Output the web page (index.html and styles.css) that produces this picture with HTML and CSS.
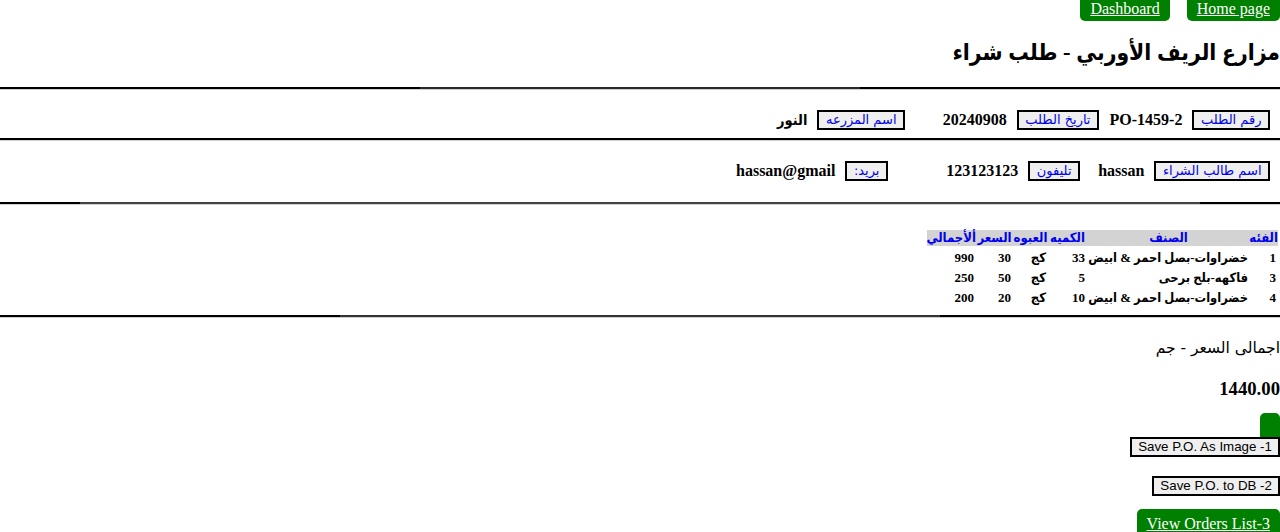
FILE: index.html
```html
<!DOCTYPE html>
<html lang="ar" dir="rtl">
<head>
<meta charset="utf-8">
<title>طلب شراء</title>
<link rel="stylesheet" href="styles.css">
</head>
<body>
<nav class="top-links">
  <a class="green-btn" href="#">Home page</a>
  <a class="green-btn" href="#">Dashboard</a>
</nav>
<h2 class="title">مزارع الريف الأوربي - طلب شراء</h2>
<hr class="rule rule-a">
<div class="info-row row-one">
  <div class="field fw-1"><span class="tag">رقم الطلب</span><b class="val">PO-1459-2</b></div>
  <div class="field fw-2"><span class="tag">تاريخ الطلب</span><b class="val">20240908</b></div>
  <div class="field"><span class="tag">اسم المزرعه</span><b class="val ar-val">النور</b></div>
</div>
<hr class="rule rule-b">
<div class="info-row row-two">
  <div class="field fw-3"><span class="tag">اسم طالب الشراء</span><b class="val">hassan</b></div>
  <div class="field fw-4"><span class="tag">تليفون</span><b class="val">123123123</b></div>
  <div class="field"><span class="tag">بريد:</span><b class="val">hassan@gmail</b></div>
</div>
<hr class="rule rule-c">
<table class="items">
  <colgroup>
    <col class="c1"><col class="c2"><col class="c3"><col class="c4"><col class="c5"><col class="c6">
  </colgroup>
  <thead>
    <tr><th>الفئه</th><th>الصنف</th><th>الكميه</th><th>العبوه</th><th>السعر</th><th>ألأجمالي</th></tr>
  </thead>
  <tbody>
    <tr><td>1</td><td class="item">خضراوات-بصل احمر &amp; ابيض</td><td>33</td><td>كج</td><td>30</td><td>990</td></tr>
    <tr><td>3</td><td class="item">فاكهه-بلح برحى</td><td>5</td><td>كج</td><td>50</td><td>250</td></tr>
    <tr><td>4</td><td class="item">خضراوات-بصل احمر &amp; ابيض</td><td>10</td><td>كج</td><td>20</td><td>200</td></tr>
  </tbody>
</table>
<hr class="rule rule-d">
<p class="total-label">اجمالى السعر - جم</p>
<h3 class="total">1440.00</h3>
<div class="actions">
  <a class="green-stub" href="#"></a>
  <button class="act-btn" type="button">1- Save P.O. As Image</button>
  <button class="act-btn second" type="button">2- Save P.O. to DB</button>
  <a class="green-btn orders" href="#">3-View Orders List</a>
</div>
</body>
</html>
```
FILE: styles.css
```css
html, body {
  margin: 0;
  padding: 0;
  background: #ffffff;
}
body {
  font-family: "Liberation Serif", "DejaVu Sans Condensed", "DejaVu Sans", serif;
  font-size: 16px;
  color: #000;
  overflow: hidden;
}
.top-links {
  display: flex;
  gap: 17px;
  height: 21px;
}
.green-btn {
  display: block;
  background: #008000;
  color: #fff;
  text-decoration: underline;
  padding: 0 10px;
  height: 21px;
  line-height: 18px;
  border-radius: 0 0 5px 5px;
  font-family: "Liberation Serif", serif;
  font-size: 16px;
}
.title {
  margin: 18px 0 0 0;
  font-size: 22.7px;
  line-height: 28px;
  font-weight: bold;
  font-family: "Liberation Serif", "DejaVu Sans Condensed", "DejaVu Sans", serif;
}
.rule {
  border: 0;
  height: 2px;
  margin: 0;
  box-shadow: 0 1px 0 #cfcfcf;
}
.rule-a {
  margin-top: 20px;
  background: linear-gradient(to right, #000 0 420px, #2a2a2a 420px 860px, #000 860px);
}
.rule-b {
  margin-top: 8px;
  background: #000;
}
.rule-c {
  margin-top: 21px;
  background: linear-gradient(to right, #000 0 80px, #444 80px 1200px, #000 1200px);
}
.rule-d {
  margin-top: 7px;
  background: linear-gradient(to right, #000 0 340px, #333 340px 940px, #000 940px);
}
.info-row {
  display: flex;
  align-items: center;
  height: 20px;
  padding-right: 10px;
}
.row-one {
  margin-top: 21px;
}
.row-two {
  margin-top: 21px;
}
.field {
  display: flex;
  align-items: center;
  gap: 10px;
  flex: none;
}
.fw-1 { width: 171px; }
.fw-2 { width: 194px; }
.fw-3 { width: 190px; }
.fw-4 { width: 192px; }
.tag {
  display: inline-block;
  box-sizing: border-box;
  height: 20px;
  line-height: 16px;
  padding: 0 6.5px;
  border: 2px solid #000;
  background: #efefef;
  color: #0000ee;
  font-family: "DejaVu Sans", sans-serif;
  font-size: 13px;
}
.val {
  font-weight: bold;
  font-size: 16px;
  font-family: "Liberation Serif", "DejaVu Sans Condensed", "DejaVu Sans", serif;
  white-space: nowrap;
}
.ar-val {
  font-size: 14.5px;
}
.items {
  margin: 26px 2px 0 0;
  border-collapse: collapse;
  table-layout: fixed;
  width: 351px;
  font-size: 13px;
}
.c1 { width: 28px; }
.c2 { width: 163px; }
.c3 { width: 39px; }
.c4 { width: 35px; }
.c5 { width: 37px; }
.c6 { width: 49px; }
.items th {
  background: #d3d3d3;
  color: #0000ee;
  font-family: "DejaVu Sans Condensed", "DejaVu Sans", sans-serif;
  font-weight: bold;
  height: 16px;
  line-height: 16px;
  padding: 0;
  text-align: center;
  white-space: nowrap;
  border-bottom: 2px solid #fff;
}
.items td {
  font-family: "Liberation Serif", "DejaVu Sans Condensed", "DejaVu Sans", serif;
  font-weight: bold;
  height: 20px;
  line-height: 20px;
  padding: 0 2px 0 1px;
  text-align: right;
  white-space: nowrap;
}
.items td.item {
  font-size: 12.8px;
}
.total-label {
  margin: 22px 0 0 0;
  font-family: "DejaVu Sans", sans-serif;
  font-size: 15.5px;
  line-height: 19px;
}
.total {
  margin: 20px 0 0 0;
  font-size: 18.72px;
  line-height: 22px;
  font-weight: bold;
}
.actions {
  margin-top: 13px;
  display: flex;
  flex-direction: column;
  align-items: flex-start;
}
.green-stub {
  display: block;
  width: 20px;
  height: 24px;
  background: #008000;
  border-radius: 5px 5px 0 0;
}
.act-btn {
  box-sizing: border-box;
  height: 20px;
  padding: 0 6px;
  border: 2px solid #000;
  background: #efefef;
  color: #000;
  font-family: "Liberation Sans", Arial, sans-serif;
  font-size: 13.33px;
  line-height: 16px;
}
.second {
  margin-top: 19px;
}
.orders {
  margin-top: 13px;
  height: 26px;
  line-height: 29px;
  border-radius: 5px 5px 0 0;
}
```
